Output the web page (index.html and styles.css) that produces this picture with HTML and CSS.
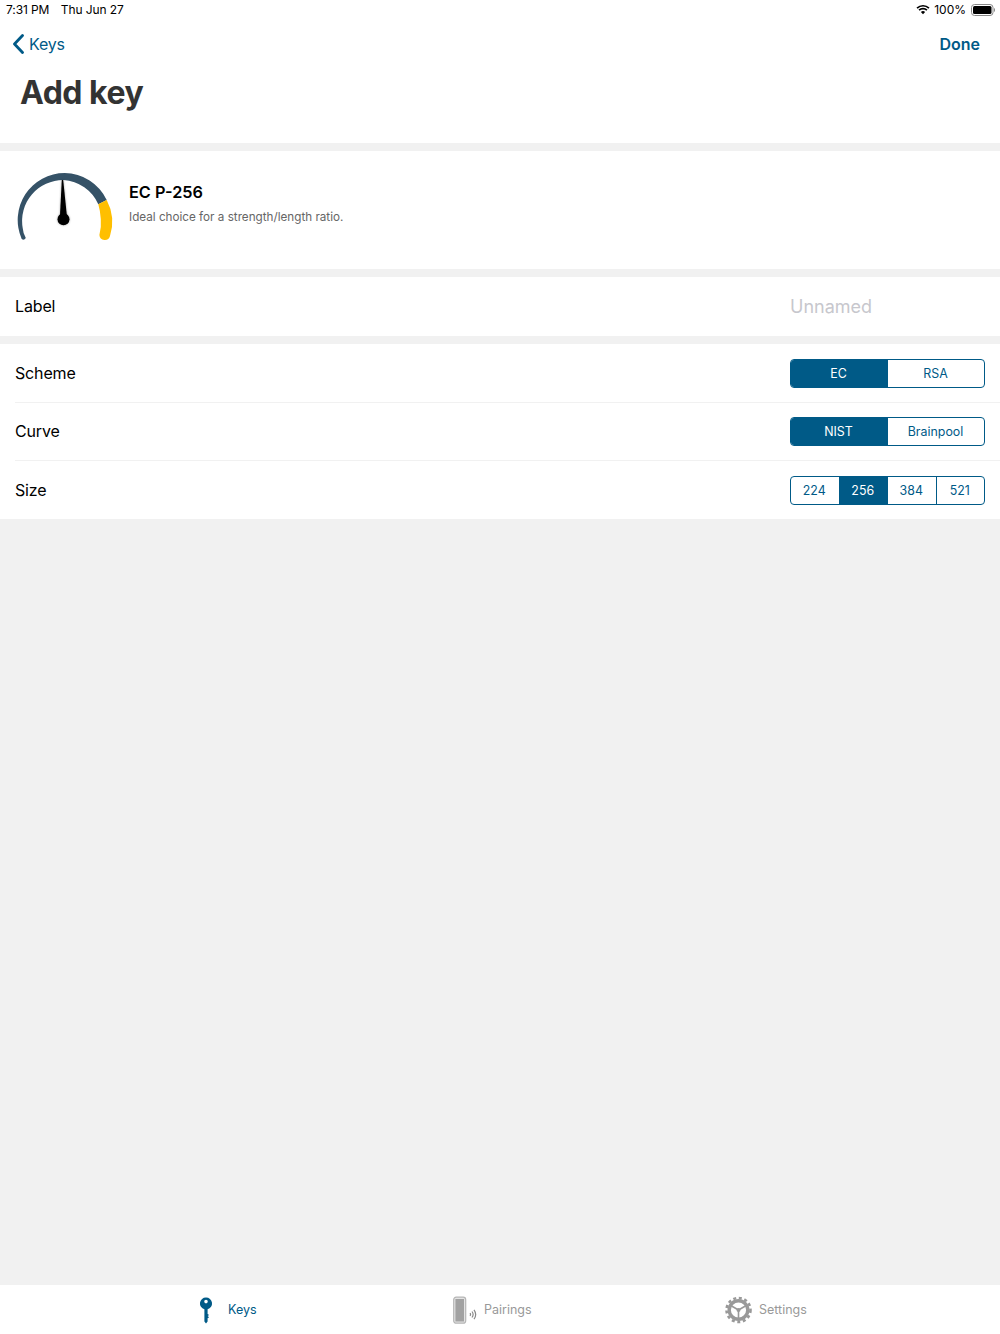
FILE: index.html
```html
<!DOCTYPE html>
<html lang="en">
<head>
<meta charset="utf-8">
<title>Add key</title>
<link rel="stylesheet" href="styles.css">
</head>
<body>
<div class="app">
  <header class="header">
    <div class="status">
      <div class="status-left"><span>7:31 PM</span><span>Thu Jun 27</span></div>
      <div class="status-right">
        <svg class="wifi" width="14" height="11" viewBox="0 0 16 12"><path d="M8 11.500 5.600 8.900a3.400 3.400 0 0 1 4.800 0Z" fill="#000"/><path d="M3.500 6.800a6.400 6.400 0 0 1 9 0M1.200 4.500a9.600 9.600 0 0 1 13.600 0" fill="none" stroke="#000" stroke-width="1.900"/></svg>
        <span>100%</span>
        <svg width="24" height="12" viewBox="0 0 24 12"><rect x=".5" y=".5" width="21.500" height="11" rx="3" fill="none" stroke="#888"/><rect x="2" y="2" width="18.500" height="8" rx="1.500" fill="#000"/><path d="M23 4v4c.6-.3 1-1 1-2s-.4-1.700-1-2Z" fill="#888"/></svg>
      </div>
    </div>
    <nav class="nav">
      <div class="back">
        <svg width="13" height="20" viewBox="0 0 13 20"><path d="M10.500 1.500 2.500 10l8 8.500" fill="none" stroke="#005a87" stroke-width="2.800" stroke-linecap="round" stroke-linejoin="round"/></svg>
        <span>Keys</span>
      </div>
      <div class="done">Done</div>
    </nav>
    <h1 class="title">Add key</h1>
  </header>

  <section class="card gauge-card">
    <svg class="gauge" width="110" height="85" viewBox="0 0 110 85">
      <path d="M11.700 74A47 47 0 0 1 54.700 8A47 47 0 0 1 96.700 35L88.300 39.300A41 41 0 0 0 53.500 15A41 41 0 0 0 12.700 63Q13 68 15.800 73Q14 76 11.700 74Z" fill="#355267"/>
      <path d="M96.700 35A47 47 0 0 1 100 71A5.400 5.400 0 0 1 89.400 70Q91.500 62 90.800 54Q90.300 46 88.300 39.300Z" fill="#ffbf00"/>
      <path class="needle" d="M51.800 15H53.200L56.800 50H50Z" fill="#000"/>
      <circle class="needle" cx="53.500" cy="54.300" r="6" fill="#000"/>
    </svg>
    <div class="gauge-text">
      <div class="gauge-name">EC P-256</div>
      <div class="gauge-desc">Ideal choice for a strength/length ratio.</div>
    </div>
  </section>

  <section class="card row-label">
    <div class="row-name">Label</div>
    <div class="placeholder">Unnamed</div>
  </section>

  <section class="card options">
    <div class="row">
      <div class="row-name">Scheme</div>
      <div class="seg"><div class="seg-item on">EC</div><div class="seg-item">RSA</div></div>
    </div>
    <div class="row">
      <div class="row-name">Curve</div>
      <div class="seg"><div class="seg-item on">NIST</div><div class="seg-item">Brainpool</div></div>
    </div>
    <div class="row">
      <div class="row-name">Size</div>
      <div class="seg"><div class="seg-item">224</div><div class="seg-item on">256</div><div class="seg-item">384</div><div class="seg-item">521</div></div>
    </div>
  </section>

  <main class="fill"></main>

  <footer class="tabbar">
    <div class="tab tab-keys active">
      <svg width="16" height="28" viewBox="0 0 16 28"><path fill-rule="evenodd" d="M8 1.500a6 6 0 0 1 1.600 11.800V18l1.500 1-1.500 1 1.500 1.200-1.500 1v3.300L8 27.500l-1.600-2V13.300A6 6 0 0 1 8 1.500Zm0 2.300a1.800 1.800 0 1 0 0 3.600 1.800 1.800 0 0 0 0-3.600Z" fill="#005a87"/></svg>
      <span>Keys</span>
    </div>
    <div class="tab tab-pair">
      <svg width="24" height="28" viewBox="0 0 24 28"><rect x=".7" y="1.200" width="12" height="26" rx="2.500" fill="#e4e4e4" stroke="#b5b5b5" stroke-width="1.200"/><rect x="2.400" y="3" width="8.600" height="22.500" fill="#a2a2a2"/><path d="M17 17.200a2 2 0 0 1 0 2.600M19 15.500a5 5 0 0 1 0 6M21 13.800a8 8 0 0 1 0 9.400" fill="none" stroke="#888" stroke-width="1.200"/></svg>
      <span>Pairings</span>
    </div>
    <div class="tab tab-set">
      <svg width="27" height="28" viewBox="0 0 27 28"><circle cx="13.500" cy="14" r="12" fill="none" stroke="#999" stroke-width="2.600" stroke-dasharray="3 2.650"/><circle cx="13.500" cy="14" r="9.300" fill="#fff" stroke="#999" stroke-width="3.400"/><path d="M13.500 14V23M13.500 14 5.700 9.500M13.500 14l7.800-4.500" fill="none" stroke="#999" stroke-width="1.600"/><circle cx="13.500" cy="14" r="2" fill="#999"/></svg>
      <span>Settings</span>
    </div>
  </footer>
</div>
</body>
</html>
```
FILE: styles.css
```css
* { box-sizing: border-box; }
html, body { margin: 0; padding: 0; }
body { font-family: Inter, "Liberation Sans", sans-serif; color: #000; background: #f1f1f1; }
.app { width: 1000px; height: 1334px; display: flex; flex-direction: column; overflow: hidden; }

.header { height: 143px; background: #fff; }
.status { height: 20px; padding: 0 5px 1px 6px; display: flex; justify-content: space-between; align-items: center; font-size: 12px; }
.status-left { display: flex; gap: 11.500px; letter-spacing: -0.1px; }
.status-right { display: flex; align-items: center; gap: 5px; }
.wifi { margin-left: 1px; margin-right: -1px; }
.nav { height: 48px; padding: 0 20px 0 12px; display: flex; justify-content: space-between; align-items: center; color: #005a87; font-size: 16px; }
.back { display: flex; align-items: center; gap: 4px; letter-spacing: -0.2px; }
.done { font-weight: 600; }
.title { margin: 0; padding-left: 20px; font-size: 32px; line-height: 50px; font-weight: 700; color: #333; letter-spacing: -0.5px; }

.card { background: #fff; }
.gauge-card { height: 118px; margin-top: 8px; padding: 14px 0 0 10px; display: flex; }
.gauge { flex: none; }
.gauge-text { margin-left: 9px; padding-top: 16px; }
.gauge-name { font-size: 16.300px; font-weight: 600; line-height: 22px; }
.gauge-desc { margin-top: 6px; font-size: 11.700px; line-height: 17px; color: #666; }
.needle { filter: drop-shadow(0 0 1px rgba(0, 0, 0, .35)); }

.row-label { height: 59px; margin-top: 8px; padding: 0 0 1px 15px; display: flex; justify-content: space-between; align-items: center; }
.row-name { font-size: 16px; letter-spacing: -0.15px; }
.placeholder { width: 210px; padding-top: 1px; font-size: 18px; letter-spacing: 0; color: #c7c7cd; }

.options { margin-top: 8px; height: 175px; padding-left: 15px; }
.row { height: 58.500px; padding: 1px 15px 0 0; display: flex; justify-content: space-between; align-items: center; border-bottom: 1px solid #f1f1f1; }
.row:last-child { border-bottom: 0; }
.row-name { margin-top: -1px; }
.seg { width: 195px; height: 29px; display: flex; border: 1px solid #005a87; border-radius: 4px; overflow: hidden; }
.seg-item { flex: 1 1 0; padding-right: 1px; display: flex; align-items: center; justify-content: center; font-size: 12.400px; color: #005a87; border-left: 1px solid #005a87; }
.seg-item:first-child { border-left: 0; }
.seg-item.on { background: #005a87; color: #fff; }

.fill { flex: 1; }
.tabbar { height: 49px; background: #fff; padding-left: 198px; display: flex; align-items: center; font-size: 12.500px; color: #999; }
.tab { display: flex; align-items: center; gap: 7px; }
.tab-keys { width: 255px; gap: 14px; }
.tab-pair { width: 272px; }
.tab.active { color: #005a87; }
```
